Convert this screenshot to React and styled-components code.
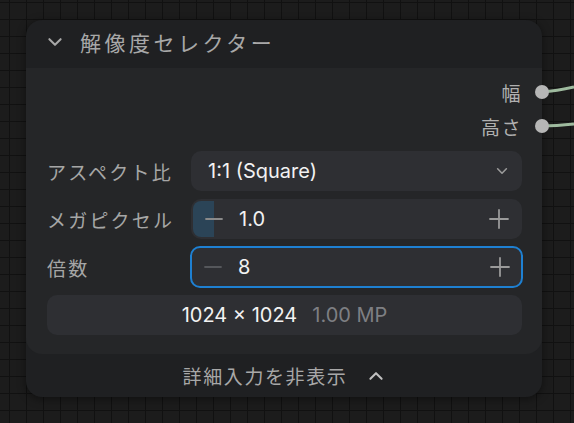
import React from "react";
import styled, { createGlobalStyle } from "styled-components";

const GlobalStyle = createGlobalStyle`
  html, body {
    margin: 0;
    padding: 0;
    width: 100%;
    height: 100%;
    overflow: hidden;
  }
  body {
    font-family: "Inter", "Noto Sans CJK JP", sans-serif;
  }
`;

const widgets = [
  { label: "アスペクト比", type: "select", value: "1:1 (Square)" },
  { label: "メガピクセル", type: "number", value: "1.0", fill: 21 },
  { label: "倍数", type: "number", value: "8", focused: true },
];

const Chevron = ({ up, size = 16, color = "#a0a0a0" }) => (
  <svg width={size} height={size} viewBox="0 0 16 16" fill="none">
    <path
      d={up ? "M3 10.5 L8 5.5 L13 10.5" : "M3 5.5 L8 10.5 L13 5.5"}
      stroke={color}
      strokeWidth="1.8"
      strokeLinecap="round"
      strokeLinejoin="round"
    />
  </svg>
);

const Minus = ({ color }) => (
  <svg width="18" height="18" viewBox="0 0 18 18">
    <path d="M1 9 H17" stroke={color} strokeWidth="1.8" strokeLinecap="round" />
  </svg>
);

const Plus = () => (
  <svg width="20" height="20" viewBox="0 0 20 20">
    <path
      d="M1 10 H19 M10 1 V19"
      stroke="#9a9a9a"
      strokeWidth="1.8"
      strokeLinecap="round"
    />
  </svg>
);

export default function App() {
  return (
    <Canvas>
      <GlobalStyle />
      <Wires width="574" height="423">
        <path d="M542 92 C 555 91, 565 89, 574 87" stroke="#9fbb9f" strokeWidth="3" fill="none" />
        <path d="M542 126 C 555 126, 565 125, 574 124" stroke="#9fbb9f" strokeWidth="3" fill="none" />
      </Wires>
      <Node>
        <Header>
          <Chevron size={18} color="#a8a8a8" />
          <Title>解像度セレクター</Title>
        </Header>
        <Body>
          <Outputs>
            <OutputRow>
              幅<Dot />
            </OutputRow>
            <OutputRow>
              高さ<Dot />
            </OutputRow>
          </Outputs>
          <WidgetGrid>
            {widgets.map((w) => (
              <React.Fragment key={w.label}>
                <Label>{w.label}</Label>
                {w.type === "select" ? (
                  <Field>
                    <Value>{w.value}</Value>
                    <Spacer />
                    <Chevron size={14} color="#9a9a9a" />
                  </Field>
                ) : (
                  <Field $focused={w.focused}>
                    {w.fill && <Fill style={{ width: w.fill }} />}
                    <Stepper>
                      <Minus color={w.focused ? "#55575b" : "#8a8a8a"} />
                    </Stepper>
                    <Value>{w.value}</Value>
                    <Spacer />
                    <Plus />
                  </Field>
                )}
              </React.Fragment>
            ))}
            <Info>
              <span>1024 × 1024</span>
              <Muted>1.00 MP</Muted>
            </Info>
          </WidgetGrid>
        </Body>
        <Footer>
          <span>詳細入力を非表示</span>
          <Chevron up size={18} color="#c0c0c0" />
        </Footer>
      </Node>
    </Canvas>
  );
}

const Canvas = styled.div`
  position: relative;
  width: 574px;
  height: 423px;
  background-color: #1c1c1c;
  background-image: linear-gradient(#111111 1.5px, transparent 1.5px),
    linear-gradient(90deg, #111111 1.5px, transparent 1.5px);
  background-size: 17px 17px;
  background-position: 9px 2px;
  overflow: hidden;
`;

const Wires = styled.svg`
  position: absolute;
  left: 0;
  top: 0;
`;

const Node = styled.div`
  position: absolute;
  left: 26px;
  top: 20px;
  width: 516px;
  background: #1f2022;
  border-radius: 16px;
  box-shadow: 0 2px 10px rgba(0, 0, 0, 0.45);
  display: flex;
  flex-direction: column;
`;

const Header = styled.div`
  height: 48px;
  display: flex;
  align-items: center;
  padding-left: 20px;
  padding-bottom: 5px;
  gap: 16px;
  box-sizing: border-box;
`;

const Title = styled.div`
  color: #a8a8a8;
  font-size: 21px;
  letter-spacing: 3.5px;
`;

const Body = styled.div`
  background: #252628;
  border-radius: 0 0 16px 16px;
  padding: 7px 20px 19px 21px;
  display: flex;
  flex-direction: column;
  gap: 8px;
`;

const Outputs = styled.div`
  display: flex;
  flex-direction: column;
  align-items: flex-end;
`;

const OutputRow = styled.div`
  position: relative;
  height: 34px;
  display: flex;
  align-items: center;
  color: #b0b0b0;
  font-size: 19px;
  letter-spacing: 1.5px;
`;

const Dot = styled.span`
  position: absolute;
  right: -27px;
  top: 10px;
  width: 14px;
  height: 14px;
  border-radius: 50%;
  background: #b6b6b6;
`;

const WidgetGrid = styled.div`
  display: grid;
  grid-template-columns: 144px 1fr;
  grid-auto-rows: 40px;
  row-gap: 8px;
  align-items: center;
`;

const Label = styled.div`
  color: #a6a6a6;
  font-size: 19px;
  letter-spacing: 2.2px;
  white-space: nowrap;
`;

const Field = styled.div`
  position: relative;
  box-sizing: border-box;
  display: flex;
  align-items: center;
  padding: 0 11px 0 15px;
  background: #2e2f33;
  border-radius: 10px;
  overflow: hidden;
  border: 2px solid ${(p) => (p.$focused ? "#1e80d2" : "transparent")};
  margin: ${(p) => (p.$focused ? "-1px -1px" : "0")};
  height: ${(p) => (p.$focused ? "42px" : "40px")};
`;

const Fill = styled.div`
  position: absolute;
  left: 0;
  top: 0;
  bottom: 0;
  background: #2b4457;
`;

const Stepper = styled.div`
  position: relative;
  display: flex;
  width: 34px;
  margin-left: -3px;
`;

const Value = styled.span`
  position: relative;
  color: #f2f2f2;
  font-size: 20px;
  font-weight: 400;
`;

const Spacer = styled.div`
  flex: 1;
`;

const Info = styled.div`
  grid-column: 1 / -1;
  height: 100%;
  background: #2e2f33;
  border-radius: 10px;
  display: flex;
  align-items: center;
  justify-content: center;
  gap: 15px;
  font-size: 20px;
  color: #f2f2f2;
`;

const Muted = styled.span`
  color: #7e7f83;
`;

const Footer = styled.div`
  height: 43px;
  display: flex;
  align-items: center;
  justify-content: center;
  gap: 20px;
  color: #a8a8a8;
  font-size: 19px;
  letter-spacing: 1.6px;
`;
